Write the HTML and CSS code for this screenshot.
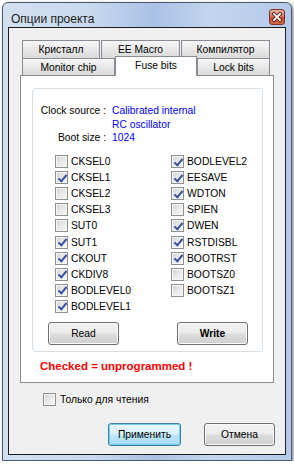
FILE: index.html
```html
<!DOCTYPE html>
<html lang="ru">
<head>
<meta charset="utf-8">
<title>Опции проекта</title>
<link rel="stylesheet" href="styles.css">
</head>
<body>
<div class="window">
  <div class="titlebar">
    <span class="title">Опции проекта</span>
    <span class="close">
      <svg width="14" height="14" viewBox="0 0 14 14">
        <path d="M4 4 L10 10 M10 4 L4 10" stroke="#5a2418" stroke-width="3.6" stroke-linecap="square" fill="none"/>
        <path d="M4 4 L10 10 M10 4 L4 10" stroke="#ffffff" stroke-width="1.8" stroke-linecap="square" fill="none"/>
      </svg>
    </span>
  </div>
  <div class="client">
    <div class="tabs">
      <div class="tabrow row1">
        <div class="tab w78">Кристалл</div>
        <div class="tab w79">EE Macro</div>
        <div class="tab w89">Компилятор</div>
      </div>
      <div class="tabrow row2">
        <div class="tab w93">Monitor chip</div>
        <div class="tab sel w82">Fuse bits</div>
        <div class="tab w73">Lock bits</div>
      </div>
      <div class="panel">
        <div class="group">
          <div class="info">
            <span class="lbl">Clock source :</span><span class="val">Calibrated internal</span>
            <span class="lbl"></span><span class="val">RC oscillator</span>
            <span class="lbl">Boot size :</span><span class="val">1024</span>
          </div>
          <div class="fuses">
            <div class="fuse"><span class="cb"></span>CKSEL0</div>
            <div class="fuse"><span class="cb on"></span>CKSEL1</div>
            <div class="fuse"><span class="cb"></span>CKSEL2</div>
            <div class="fuse"><span class="cb"></span>CKSEL3</div>
            <div class="fuse"><span class="cb"></span>SUT0</div>
            <div class="fuse"><span class="cb on"></span>SUT1</div>
            <div class="fuse"><span class="cb on"></span>CKOUT</div>
            <div class="fuse"><span class="cb on"></span>CKDIV8</div>
            <div class="fuse"><span class="cb on"></span>BODLEVEL0</div>
            <div class="fuse"><span class="cb on"></span>BODLEVEL1</div>
            <div class="fuse"><span class="cb on"></span>BODLEVEL2</div>
            <div class="fuse"><span class="cb on"></span>EESAVE</div>
            <div class="fuse"><span class="cb on"></span>WDTON</div>
            <div class="fuse"><span class="cb"></span>SPIEN</div>
            <div class="fuse"><span class="cb on"></span>DWEN</div>
            <div class="fuse"><span class="cb on"></span>RSTDISBL</div>
            <div class="fuse"><span class="cb on"></span>BOOTRST</div>
            <div class="fuse"><span class="cb"></span>BOOTSZ0</div>
            <div class="fuse"><span class="cb"></span>BOOTSZ1</div>
          </div>
          <div class="gbtns">
            <div class="btn w71">Read</div>
            <div class="btn w71 bold">Write</div>
          </div>
        </div>
        <div class="note">Checked = unprogrammed !</div>
      </div>
    </div>
    <div class="ro"><span class="cb"></span>Только для чтения</div>
    <div class="footer">
      <div class="btn default w73">Применить</div>
      <div class="btn w71">Отмена</div>
    </div>
  </div>
</div>
</body>
</html>
```
FILE: styles.css
```css
body {
  margin: 0;
  background: #ffffff;
  font-family: "Liberation Sans", Arial, sans-serif;
  font-size: 10.3px;
  color: #000;
}

.window {
  margin: 2px 0 0 2px;
  width: 290px;
  height: 459px;
  box-sizing: border-box;
  border: 1px solid #4a586b;
  border-radius: 6px 6px 0 0;
  padding: 0 5px 5px;
  display: flex;
  flex-direction: column;
  background: linear-gradient(90deg, #d3e0f1 0%, #c9d9ef 30%, #a9c1e5 52%, #c3d5ee 72%, #b4caea 100%);
  box-shadow: 2px 2px 4px rgba(0, 0, 0, 0.45);
}

.titlebar {
  height: 24px;
  box-sizing: border-box;
  display: flex;
  justify-content: space-between;
  align-items: flex-start;
  padding: 6px 1px 0 3px;
}

.title {
  font-size: 12px;
  line-height: 15px;
  margin-top: 3px;
  color: #1e1e1e;
}

.close {
  width: 16px;
  height: 16px;
  box-sizing: border-box;
  border: 1px solid #7a3526;
  border-radius: 3px;
  background: linear-gradient(#eab2a3 0%, #dc7c66 45%, #c9482c 55%, #d2664a 100%);
  display: flex;
  align-items: center;
  justify-content: center;
}

.client {
  flex: 1;
  border: 1px solid #1c1c1c;
  background: #f0f0f0;
  display: flex;
  flex-direction: column;
}

.tabs {
  margin: 12px 11px 0;
}

.tabrow {
  display: flex;
  padding-left: 2px;
}

.tab {
  box-sizing: border-box;
  border: 1px solid #898c95;
  border-bottom: none;
  background: linear-gradient(#f6f6f6, #dadada);
  text-align: center;
}

.row1 .tab {
  height: 18px;
  line-height: 17px;
  margin-right: 1px;
}

.row2 {
  height: 17px;
  align-items: flex-end;
}

.row2 .tab {
  height: 17px;
  line-height: 17px;
}

.row2 .tab.sel {
  height: 20px;
  line-height: 17px;
  margin-bottom: -1px;
  background: #ffffff;
  position: relative;
  z-index: 1;
}

.w71 { width: 71px; }
.w73 { width: 73px; }
.w78 { width: 78px; }
.w79 { width: 79px; }
.w82 { width: 82px; }
.w89 { width: 89px; }
.w93 { width: 93px; }

.panel {
  height: 308px;
  box-sizing: border-box;
  border: 1px solid #898c95;
  background: #ffffff;
  overflow: hidden;
}

.group {
  margin: 12px 10px 0 11px;
  border: 1px solid #d5dfe5;
  border-radius: 3px;
  padding: 15px 0 6px;
}

.info {
  display: grid;
  grid-template-columns: 73px auto;
  column-gap: 6px;
  line-height: 13.5px;
}

.lbl {
  text-align: right;
  white-space: nowrap;
}

.val {
  color: #0000ff;
}

.fuses {
  margin-top: 9px;
  padding-left: 22px;
  display: grid;
  grid-template-columns: 116px 1fr;
  grid-template-rows: repeat(10, 16.1px);
  grid-auto-flow: column;
}

.fuse {
  display: flex;
  align-items: center;
  gap: 3px;
}

.cb {
  width: 13px;
  height: 13px;
  box-sizing: border-box;
  border: 1px solid #8e8f8f;
  background: linear-gradient(135deg, #d2d2d2 0%, #e8e8e8 50%, #f8f8f8 100%);
  box-shadow: inset 0 0 0 1px #f6f6f6;
  position: relative;
  flex: none;
}

.cb.on::after {
  content: "";
  position: absolute;
  left: 3.5px;
  top: 0.5px;
  width: 3px;
  height: 7px;
  border: solid #3a52a6;
  border-width: 0 2px 2px 0;
  transform: rotate(40deg);
}

.gbtns {
  margin-top: 7.5px;
  padding-left: 15px;
  display: flex;
  gap: 58px;
}

.btn {
  height: 23px;
  box-sizing: border-box;
  border: 1px solid #707070;
  border-radius: 3px;
  background: linear-gradient(#f3f3f3 0%, #ebebeb 48%, #dddddd 52%, #cfcfcf 100%);
  box-shadow: inset 0 0 0 1px #fbfbfb;
  display: flex;
  align-items: center;
  justify-content: center;
}

.btn.bold {
  font-weight: bold;
}

.btn.default {
  border-color: #3c7fb1;
  background: linear-gradient(#eaf6fd 0%, #d9f0fc 48%, #bee6fd 52%, #a7d9f5 100%);
  box-shadow: inset 0 0 0 1px #6fd0f2;
}

.note {
  margin: 7px 0 0 19px;
  font-weight: bold;
  font-size: 11.5px;
  line-height: 14px;
  color: #ff0000;
}

.ro {
  margin: 10px 0 0 34px;
  height: 13px;
  display: flex;
  align-items: center;
  gap: 4px;
}

.footer {
  margin-top: 17px;
  padding-right: 10px;
  display: flex;
  justify-content: flex-end;
  gap: 23px;
}
```
